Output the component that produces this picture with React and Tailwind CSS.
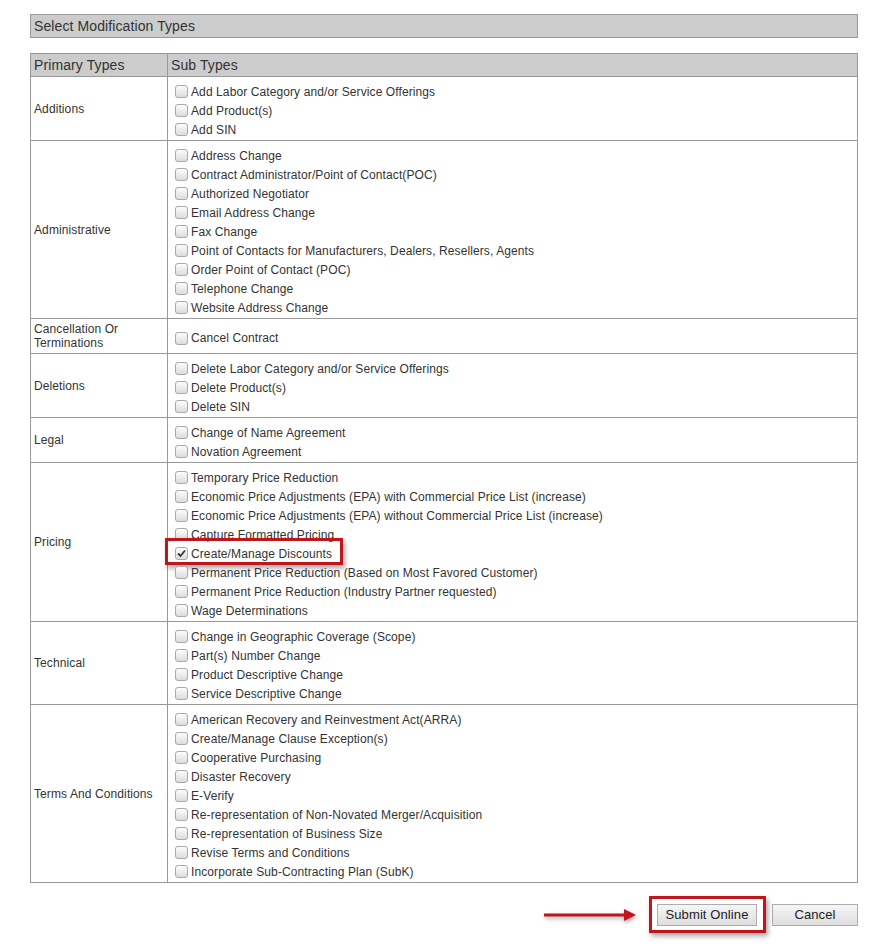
import React from 'react'

const rows = [
  { primary: 'Additions', subs: ['Add Labor Category and/or Service Offerings', 'Add Product(s)', 'Add SIN'] },
  {
    primary: 'Administrative',
    subs: [
      'Address Change',
      'Contract Administrator/Point of Contact(POC)',
      'Authorized Negotiator',
      'Email Address Change',
      'Fax Change',
      'Point of Contacts for Manufacturers, Dealers, Resellers, Agents',
      'Order Point of Contact (POC)',
      'Telephone Change',
      'Website Address Change'
    ]
  },
  { primary: 'Cancellation Or Terminations', subs: ['Cancel Contract'] },
  { primary: 'Deletions', subs: ['Delete Labor Category and/or Service Offerings', 'Delete Product(s)', 'Delete SIN'] },
  { primary: 'Legal', subs: ['Change of Name Agreement', 'Novation Agreement'] },
  {
    primary: 'Pricing',
    subs: [
      'Temporary Price Reduction',
      'Economic Price Adjustments (EPA) with Commercial Price List (increase)',
      'Economic Price Adjustments (EPA) without Commercial Price List (increase)',
      'Capture Formatted Pricing',
      'Create/Manage Discounts',
      'Permanent Price Reduction (Based on Most Favored Customer)',
      'Permanent Price Reduction (Industry Partner requested)',
      'Wage Determinations'
    ]
  },
  {
    primary: 'Technical',
    subs: [
      'Change in Geographic Coverage (Scope)',
      'Part(s) Number Change',
      'Product Descriptive Change',
      'Service Descriptive Change'
    ]
  },
  {
    primary: 'Terms And Conditions',
    subs: [
      'American Recovery and Reinvestment Act(ARRA)',
      'Create/Manage Clause Exception(s)',
      'Cooperative Purchasing',
      'Disaster Recovery',
      'E-Verify',
      'Re-representation of Non-Novated Merger/Acquisition',
      'Re-representation of Business Size',
      'Revise Terms and Conditions',
      'Incorporate Sub-Contracting Plan (SubK)'
    ]
  }
]

const CHECKED = 'Create/Manage Discounts'

// fake old-IE style checkbox
const Box = ({ checked }) => (
  <span className="ml-[4px] mr-[3px] inline-flex h-[13px] w-[13px] shrink-0 items-center justify-center rounded-[3px] border border-[#a9a9a9] bg-gradient-to-b from-[#fdfdfd] to-[#dcdcdc]">
    {checked && (
      <svg width="9" height="9" viewBox="0 0 9 9">
        <path d="M1 4.5 L3.5 7 L8 1.5" fill="none" stroke="#333" strokeWidth="1.8" />
      </svg>
    )}
  </span>
)

const SubItem = ({ label }) => {
  const checked = label === CHECKED
  return (
    <div className="relative flex h-[19px] items-center">
      <Box checked={checked} />
      <span>{label}</span>
      {checked && (
        <div className="absolute left-[-6px] top-[-6px] h-[27px] w-[178px] border-[3px] border-[#c0161b] shadow-[2px_3px_5px_rgba(0,0,0,0.35)]" />
      )}
    </div>
  )
}

const App = () => {
  return (
    <div className="h-[949px] w-[886px] bg-white pt-[14px] pl-[30px] text-[12px] tracking-[0.1px] text-[#333] [font-family:Arial,'Liberation_Sans',sans-serif]">
      <div className="flex h-[24px] w-[828px] items-center border border-[#999] bg-[#ccc] pl-[3px] text-[14px]">
        Select Modification Types
      </div>

      <table className="mt-[15px] w-[828px] border-collapse border border-[#999]">
        <thead>
          <tr className="h-[23px] bg-[#ccc] text-left text-[14px]">
            <th className="w-[137px] border border-[#999] px-[3px] font-normal">Primary Types</th>
            <th className="border border-[#999] px-[3px] font-normal">Sub Types</th>
          </tr>
        </thead>
        <tbody>
          {rows.map((r) => (
            <tr key={r.primary}>
              <td className="border border-[#999] px-[3px] py-[3px] align-middle leading-[14px]">{r.primary}</td>
              <td className="border border-[#999] px-[3px] pt-[5px] pb-[1px]">
                {r.subs.map((s) => (
                  <SubItem key={s} label={s} />
                ))}
              </td>
            </tr>
          ))}
        </tbody>
      </table>

      <div className="mt-[21px] flex w-[828px] items-center justify-end">
        <svg width="100" height="14" viewBox="0 0 100 14" className="mr-[15px] drop-shadow-[1px_2px_2px_rgba(0,0,0,0.35)]">
          <line x1="2" y1="7" x2="86" y2="7" stroke="#c0161b" strokeWidth="3" />
          <path d="M82 1 L94 7 L82 13 Z" fill="#c0161b" />
        </svg>
        <div className="relative">
          <button className="h-[22px] w-[100px] border border-[#adadad] bg-gradient-to-b from-[#f6f6f6] to-[#dedede] text-[13px] text-[#222]">
            Submit Online
          </button>
          <div className="absolute left-[-8px] top-[-8px] h-[37px] w-[117px] border-[3px] border-[#c0161b] shadow-[2px_3px_5px_rgba(0,0,0,0.35)]" />
        </div>
        <button className="ml-[15px] h-[22px] w-[86px] border border-[#adadad] bg-gradient-to-b from-[#f6f6f6] to-[#dedede] text-[13px] text-[#222]">
          Cancel
        </button>
      </div>
    </div>
  )
}

export default App
